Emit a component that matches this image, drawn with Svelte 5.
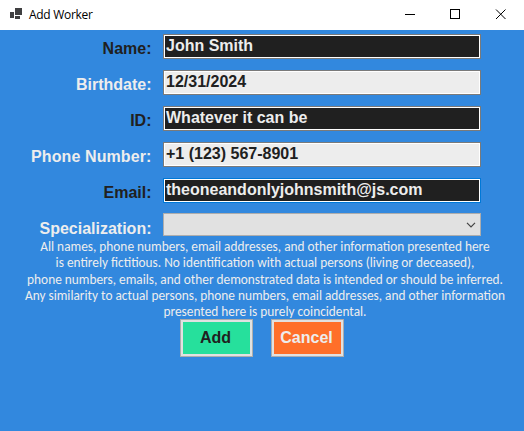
<script>
  const fields = [
    { label: 'Name:', value: 'John Smith', dark: true },
    { label: 'Birthdate:', value: '12/31/2024' },
    { label: 'ID:', value: 'Whatever it can be', dark: true },
    { label: 'Phone Number:', value: '+1 (123) 567-8901', wide: true },
    { label: 'Email:', value: 'theoneandonlyjohnsmith@js.com', dark: true, focus: true }
  ];
  const notice = [
    'All names, phone numbers, email addresses, and other information presented here',
    'is entirely fictitious. No identification with actual persons (living or deceased),',
    'phone numbers, emails, and other demonstrated data is intended or should be inferred.',
    'Any similarity to actual persons, phone numbers, email addresses, and other information',
    'presented here is purely coincidental.'
  ];
</script>

<div class="window">
  <header>
    <svg class="logo" width="12" height="11" viewBox="0 0 12 11" shape-rendering="crispEdges" fill="#3f3f41">
      <path d="M5 0h7v7H5zM0 4h4v6H0zM5 8h5v3H5z" />
    </svg>
    <span class="title">Add Worker</span>
    <svg class="controls" width="110" height="30" viewBox="0 0 110 30" fill="none" stroke="#000">
      <path d="M1 14.5h10M46.5 9.5h9v9h-9z" shape-rendering="crispEdges" />
      <path d="M92 9.5l9.5 9.5M101.5 9.5L92 19" />
    </svg>
  </header>

  <main>
    {#each fields as f}
      <div class="row">
        <span class="label" class:ink={f.dark} class:wide={f.wide}>{f.label}</span>
        <div class="field" class:dark={f.dark} class:focus={f.focus}>{f.value}</div>
      </div>
    {/each}
    <div class="row last">
      <span class="label">Specialization:</span>
      <div class="combo">
        <svg width="10" height="6" viewBox="0 0 10 6" fill="none" stroke="#444" stroke-width="1.2"><path d="M1 .8l4 4 4-4" /></svg>
      </div>
    </div>
    <div class="notice">
      {#each notice as line}<div>{line}</div>{/each}
    </div>
    <div class="buttons">
      <button class="add">Add</button>
      <button class="cancel">Cancel</button>
    </div>
  </main>
</div>

<style>
  :global(body) { margin: 0; }
  .window { width: 524px; height: 431px; background: #3288de; overflow: hidden; font-family: "Liberation Sans", Arial, sans-serif; }
  header { height: 30px; background: #fff; display: flex; align-items: center; box-sizing: border-box; padding-left: 10px; }
  .logo { margin-top: -3px; }
  .title { flex: 1; margin-left: 7px; font: 12px/16px "Open Sans", "Noto Sans", sans-serif; letter-spacing: -0.3px; color: #000; }
  .controls { margin-right: 10px; }
  main { padding-top: 4px; }
  .row { display: flex; height: 36px; align-items: flex-start; font-weight: bold; font-size: 16px; }
  .last { height: 25px; }
  .label { width: 151.5px; margin-right: 11.5px; padding-top: 6px; line-height: 18px; text-align: right; color: #ededed; white-space: nowrap; }
  .wide { letter-spacing: 0.1px; }
  .ink { color: #202020; }
  .field { box-sizing: border-box; width: 318px; height: 25px; border: 1px solid #7a7a7a; box-shadow: inset 0 0 0 1px #fff; background: #ededed; color: #202020; padding-left: 2px; line-height: 21px; white-space: nowrap; }
  .dark { background: #202020; color: #ededed; }
  .focus { border-color: #0078d7; }
  .combo { box-sizing: border-box; width: 318px; height: 23px; margin-top: -1px; border: 1px solid #adadad; background: #e1e1e1; display: flex; justify-content: flex-end; align-items: center; padding-right: 4px; }
  .notice { width: 530px; height: 80px; color: #ededed; font: 13.333px/16.3px Carlito, Lato, sans-serif; text-align: center; white-space: nowrap; }
  .buttons { display: flex; gap: 18px; padding-left: 180px; }
  button { box-sizing: border-box; width: 73px; height: 38px; margin: 0; padding: 0 2px 0 0; border: 1px solid #adadad; box-shadow: inset 0 0 0 2px #e1e1e1; font: bold 16px/34px "Liberation Sans", Arial, sans-serif; }
  .add { background: #26e09c; color: #202020; }
  .cancel { background: #ff6f29; color: #ededed; }
</style>
